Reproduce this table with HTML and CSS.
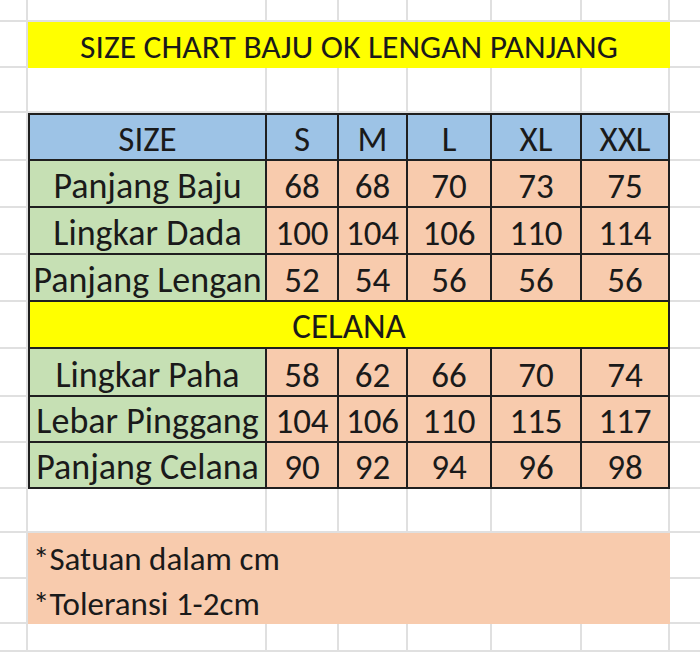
FILE: index.html
```html
<!DOCTYPE html>
<html>
<head>
<meta charset="utf-8">
<link rel="stylesheet" href="styles.css">
</head>
<body>
<div class="sheet">
  <!-- row 1 -->
  <div class="c ca"></div><div class="c"></div><div class="c"></div><div class="c"></div><div class="c"></div><div class="c"></div><div class="c"></div><div class="c ch"></div>
  <!-- row 2 -->
  <div class="c ca"></div>
  <div class="title">SIZE CHART BAJU OK LENGAN PANJANG</div>
  <div class="c ch nl"></div>
  <!-- row 3 -->
  <div class="c ca"></div><div class="c"></div><div class="c"></div><div class="c"></div><div class="c"></div><div class="c"></div><div class="c"></div><div class="c ch"></div>
  <!-- rows 4-11 -->
  <div class="c ca"></div>
  <div class="chart">
    <div class="k hd">SIZE</div><div class="k hd">S</div><div class="k hd">M</div><div class="k hd">L</div><div class="k hd">XL</div><div class="k hd">XXL</div>
    <div class="k lbl">Panjang Baju</div><div class="k v">68</div><div class="k v">68</div><div class="k v">70</div><div class="k v">73</div><div class="k v">75</div>
    <div class="k lbl">Lingkar Dada</div><div class="k v">100</div><div class="k v">104</div><div class="k v">106</div><div class="k v">110</div><div class="k v">114</div>
    <div class="k lbl">Panjang Lengan</div><div class="k v">52</div><div class="k v">54</div><div class="k v">56</div><div class="k v">56</div><div class="k v">56</div>
    <div class="k sec">CELANA</div>
    <div class="k lbl">Lingkar Paha</div><div class="k v">58</div><div class="k v">62</div><div class="k v">66</div><div class="k v">70</div><div class="k v">74</div>
    <div class="k lbl">Lebar Pinggang</div><div class="k v">104</div><div class="k v">106</div><div class="k v">110</div><div class="k v">115</div><div class="k v">117</div>
    <div class="k lbl">Panjang Celana</div><div class="k v">90</div><div class="k v">92</div><div class="k v">94</div><div class="k v">96</div><div class="k v">98</div>
  </div>
  <div class="c ch"></div>
  <div class="c ca"></div><div class="c ch"></div>
  <div class="c ca"></div><div class="c ch"></div>
  <div class="c ca"></div><div class="c ch"></div>
  <div class="c ca"></div><div class="c ch"></div>
  <div class="c ca"></div><div class="c ch"></div>
  <div class="c ca"></div><div class="c ch"></div>
  <div class="c ca"></div><div class="c ch"></div>
  <!-- row 12 -->
  <div class="c ca"></div><div class="c"></div><div class="c"></div><div class="c"></div><div class="c"></div><div class="c"></div><div class="c"></div><div class="c ch"></div>
  <!-- rows 13-14 -->
  <div class="c ca"></div>
  <div class="notes">
    <div class="note">*Satuan dalam cm</div>
    <div class="note">*Toleransi 1-2cm</div>
  </div>
  <div class="c ch"></div>
  <div class="c ca"></div><div class="c ch"></div>
  <!-- row 15 -->
  <div class="c ca"></div><div class="c"></div><div class="c"></div><div class="c"></div><div class="c"></div><div class="c"></div><div class="c"></div><div class="c ch"></div>
</div>
</body>
</html>
```
FILE: styles.css
```css
* { box-sizing: border-box; }
html, body { margin: 0; padding: 0; background: #fff; }
body {
  font-family: "Carlito", "Lato", "Liberation Sans", sans-serif;
  color: #1a1a1a;
}
.sheet {
  width: 700px;
  height: 652px;
  overflow: hidden;
  display: grid;
  grid-template-columns: 28px 239px 72px 69px 84px 90px 88px 30px;
  grid-template-rows: 22px 46px 45px 48px 47px 47px 47px 47px 48px 46px 46px 44px 46px 45px 28px;
}
.c {
  border-right: 2px solid #e0e0e0;
  border-bottom: 2px solid #e0e0e0;
}
.ca { grid-column: 1; }
.ch { grid-column: 8; border-right: none; }
.title {
  grid-column: 2 / 8;
  background: #ffff00;
  display: flex;
  align-items: flex-end;
  justify-content: center;
  font-size: 33.5px;
  line-height: 1;
  padding-bottom: 5px;
}
.chart {
  grid-column: 2 / 8;
  grid-row: span 8;
  display: grid;
  grid-template-columns: 237px 72px 69px 84px 90px 88px;
  grid-template-rows: 46px 47px 47px 47px 47px 48px 46px 46px;
  border-left: 2px solid #1f1f1f;
  border-top: 2px solid #1f1f1f;
}
.k {
  border-right: 2px solid #1f1f1f;
  border-bottom: 2px solid #1f1f1f;
  display: flex;
  align-items: flex-end;
  justify-content: center;
  font-size: 35px;
  line-height: 1;
  padding-bottom: 2px;
  white-space: nowrap;
}
.hd { background: #9dc3e6; }
.lbl { background: #c6e0b4; font-size: 36px; }
.v { background: #f8cbad; }
.sec {
  grid-column: 1 / 7;
  background: #ffff00;
  padding-bottom: 3px;
}
.notes {
  grid-column: 2 / 8;
  grid-row: span 2;
  background: #f8cbad;
  display: grid;
  grid-template-rows: 46px 45px;
}
.note {
  display: flex;
  align-items: flex-end;
  padding: 0 0 3px 5px;
  font-size: 33px;
  line-height: 1;
}
```
